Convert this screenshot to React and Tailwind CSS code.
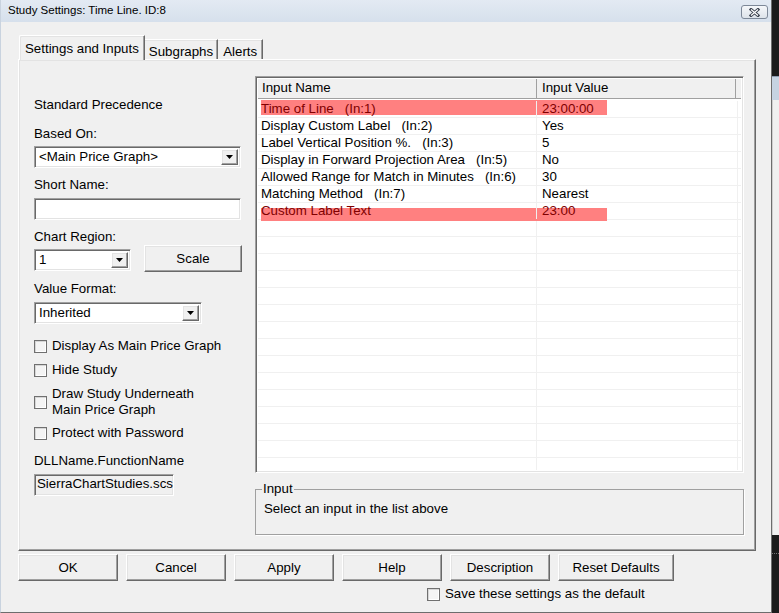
import React from 'react'

const font = { fontFamily: '"Liberation Sans", Arial, sans-serif' }

const rows = [
  { name: 'Time of Line', tag: '(In:1)', value: '23:00:00', mark: 'top' },
  { name: 'Display Custom Label', tag: '(In:2)', value: 'Yes' },
  { name: 'Label Vertical Position %.', tag: '(In:3)', value: '5' },
  { name: 'Display in Forward Projection Area', tag: '(In:5)', value: 'No' },
  { name: 'Allowed Range for Match in Minutes', tag: '(In:6)', value: '30' },
  { name: 'Matching Method', tag: '(In:7)', value: 'Nearest' },
  { name: 'Custom Label Text', tag: '', value: '23:00', mark: 'low' },
]

const raised = 'bg-[#f0f0f0] border border-t-white border-l-white border-r-[#696969] border-b-[#696969] shadow-[inset_-1px_-1px_0_#a0a0a0,inset_1px_1px_0_#e3e3e3]'
const sunken = 'border border-t-[#a0a0a0] border-l-[#a0a0a0] border-r-white border-b-white shadow-[inset_1px_1px_0_#696969,inset_-1px_-1px_0_#e3e3e3]'

function Arrow() {
  return (
    <div className={`w-[17px] h-full flex items-center justify-center ${raised}`}>
      <svg width="7" height="4" viewBox="0 0 7 4"><path d="M0 0h7L3.5 4z" fill="#000" /></svg>
    </div>
  )
}

function Combo({ width, text }) {
  return (
    <div className={`h-[22px] flex items-stretch bg-white ${sunken} p-[2px]`} style={{ width }}>
      <div className="flex-1 pl-[2px] text-[13.3px] leading-[16px] flex items-center">{text}</div>
      <Arrow />
    </div>
  )
}

function Check({ children, className = '' }) {
  return (
    <div className={`flex items-center gap-[5px] ${className}`}>
      <div className="w-[13px] h-[13px] shrink-0 border border-[#707070] bg-[#f4f4f4] shadow-[inset_1px_1px_0_#d6d6d6,inset_-1px_-1px_0_#fff]"></div>
      <div className="text-[13.3px] leading-[16px]">{children}</div>
    </div>
  )
}

function Label({ children, className = '' }) {
  return <div className={`h-[16px] text-[13.3px] leading-[16px] whitespace-nowrap ${className}`}>{children}</div>
}

function Button({ children, w = 'w-[100px]' }) {
  return (
    <div className={`${w} h-[27px] flex items-center justify-center text-[13.3px] ${raised}`}>{children}</div>
  )
}

export default function App() {
  const blank = Array.from({ length: 16 })
  return (
    <div className="w-[779px] h-[613px] flex bg-[#1b1b1b] overflow-hidden text-black" style={font}>
      <div className="w-[772px] h-full flex flex-col bg-[#f0f0f0] border-r border-b border-l border-[#6d6d6d] border-l-[#c9d3df]">
        {/* title bar */}
        <div className="h-[22px] flex items-center justify-between bg-gradient-to-b from-[#e3eaf3] to-[#d6e0ec] pl-[7px] pr-[3px]">
          <span className="text-[11.5px]">Study Settings: Time Line. ID:8</span>
          <div className="w-[27px] h-[14px] mt-[2px] rounded-[3px] border border-[#7d8898] bg-gradient-to-b from-[#f5f7fa] to-[#dde3ea] flex items-center justify-center">
            <svg width="11" height="9" viewBox="0 0 11 9">
              <path d="M2 1.5l7 6M9 1.5l-7 6" stroke="#3c4350" strokeWidth="3" strokeLinecap="square" />
              <path d="M2 1.5l7 6M9 1.5l-7 6" stroke="#fff" strokeWidth="1.2" />
            </svg>
          </div>
        </div>

        <div className="flex-1 flex flex-col pl-[17px] pt-[13px]">
          {/* tabs */}
          <div className="h-[24px] flex items-end">
            <div className="relative z-10 ml-[1px] h-[25px] mb-[-1px] px-[5px] pt-[3px] bg-[#f0f0f0] border-t border-l border-white border-r border-r-[#696969] rounded-tl-[2px] text-[13.3px] shadow-[inset_-1px_0_0_#a0a0a0,inset_1px_1px_0_#e3e3e3]">
              Settings and Inputs
            </div>
            <div className="h-[20px] px-[4px] pt-[2px] border-t border-white border-r border-r-[#696969] text-[13.3px] shadow-[inset_-1px_0_0_#a0a0a0,inset_0_1px_0_#e3e3e3]">Subgraphs</div>
            <div className="h-[20px] px-[5px] pt-[2px] border-t border-white border-r border-r-[#696969] text-[13.3px] shadow-[inset_-1px_0_0_#a0a0a0,inset_0_1px_0_#e3e3e3]">Alerts</div>
          </div>

          {/* panel */}
          <div className={`w-[738px] h-[492px] flex pl-[15px] ${raised}`}>
            {/* left column */}
            <div className="w-[207px] flex flex-col">
              <Label className="mt-[37px]">Standard Precedence</Label>
              <Label className="mt-[13px]">Based On:</Label>
              <div className="mt-[4px]"><Combo width={207} text="<Main Price Graph>" /></div>
              <Label className="mt-[9px]">Short Name:</Label>
              <div className={`mt-[5px] w-[207px] h-[22px] bg-white ${sunken}`}></div>
              <Label className="mt-[9px]">Chart Region:</Label>
              <div className="flex items-start h-[27px]">
                <div className="mt-[4px]"><Combo width={97} text="1" /></div>
                <div className="ml-[13px]"><Button w="w-[98px]">Scale</Button></div>
              </div>
              <Label className="mt-[9px]">Value Format:</Label>
              <div className="mt-[5px]"><Combo width={168} text="Inherited" /></div>
              <Check className="mt-[14px]">Display As Main Price Graph</Check>
              <Check className="mt-[8px]">Hide Study</Check>
              <Check className="mt-[8px]">Draw Study Underneath<br />Main Price Graph</Check>
              <Check className="mt-[7px]">Protect with Password</Check>
              <Label className="mt-[12px]">DLLName.FunctionName</Label>
              <div className={`mt-[5px] w-[140px] h-[22px] overflow-hidden whitespace-nowrap pl-[2px] text-[13.3px] leading-[18px] bg-[#f0f0f0] ${sunken}`}>SierraChartStudies.scs</div>
            </div>

            {/* right column */}
            <div className="ml-[14px] w-[489px] flex flex-col">
              <div className={`mt-[16px] h-[397px] flex flex-col bg-white p-[2px] ${sunken}`}>
                <div className="h-[20px] flex bg-[#f0f0f0] border-b border-[#a0a0a0] text-[13.3px] leading-[18px]">
                  <div className="w-[279px] pl-[4px] border-r border-[#a0a0a0]">Input Name</div>
                  <div className="w-[199px] pl-[5px] border-r border-[#a0a0a0]">Input Value</div>
                  <div className="flex-1"></div>
                </div>
                <div className="flex-1 overflow-hidden pt-[2px]">
                  {rows.map((r, i) => (
                    <div key={i} className="relative h-[17px] flex border-b border-[#f0f0f0] text-[13.3px] leading-[15px]">
                      {r.mark && (
                        <div className={`absolute left-[3px] w-[346px] bg-[#ff8080] ${r.mark === 'top' ? 'top-[-1px] h-[15px]' : 'top-[5px] h-[13px]'}`}></div>
                      )}
                      <div className={`relative w-[279px] pl-[3px] whitespace-pre border-r border-[#f0f0f0] ${r.mark ? 'text-[#800000]' : ''}`}>
                        {r.name}{r.tag ? '   ' + r.tag : ''}
                      </div>
                      <div className={`relative w-[201px] pl-[5px] border-r border-[#f0f0f0] ${r.mark ? 'text-[#800000]' : ''}`}>{r.value}</div>
                      <div className="flex-1"></div>
                    </div>
                  ))}
                  {blank.map((_, i) => (
                    <div key={'b' + i} className="h-[17px] flex border-b border-[#f0f0f0]">
                      <div className="w-[279px] border-r border-[#f0f0f0]"></div>
                      <div className="w-[201px] border-r border-[#f0f0f0]"></div>
                    </div>
                  ))}
                </div>
              </div>

              <div className="relative mt-[16px] h-[46px] border border-[#a0a0a0] shadow-[1px_1px_0_#fff]">
                <div className="absolute -top-[9px] left-[6px] px-[1px] bg-[#f0f0f0] text-[13.3px] leading-[16px]">Input</div>
                <div className="pl-[8px] pt-[11px] text-[13.3px] leading-[16px]">Select an input in the list above</div>
              </div>
            </div>
          </div>

          {/* buttons */}
          <div className="mt-[3px] flex gap-[8px]">
            <Button>OK</Button>
            <Button>Cancel</Button>
            <Button>Apply</Button>
            <Button>Help</Button>
            <Button>Description</Button>
            <Button w="w-[116px]">Reset Defaults</Button>
          </div>
          <Check className="mt-[5px] ml-[409px]">Save these settings as the default</Check>
        </div>
      </div>

      {/* background beyond the dialog */}
      <div className="flex-1 flex flex-col">
        <div className="h-[76px]"></div>
        <div className="h-[24px] bg-[#c6d3e2] border-t border-[#8d9bb0]"></div>
        <div className="h-[435px] bg-[#f0f0f0] border-l border-[#cfcfcf]"></div>
        <div className="mt-[18px] border-t border-dotted border-[#777]"></div>
      </div>
    </div>
  )
}
